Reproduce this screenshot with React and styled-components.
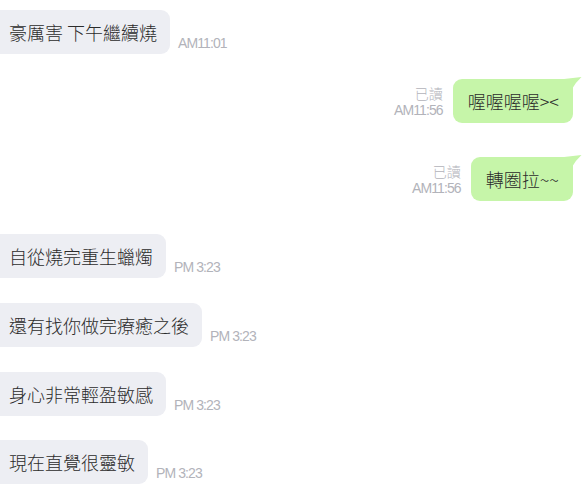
import React from "react";
import styled, { createGlobalStyle } from "styled-components";

const GlobalStyle = createGlobalStyle`
  html, body {
    margin: 0;
    padding: 0;
    background: #ffffff;
    overflow: hidden;
  }
  body {
    font-family: "Noto Sans CJK TC", "Liberation Sans", sans-serif;
  }
`;

const Chat = styled.div`
  width: 582px;
  height: 490px;
  display: flex;
  flex-direction: column;
  padding-top: 10px;
  box-sizing: border-box;
  overflow: hidden;
`;

const Row = styled.div`
  display: flex;
  align-items: flex-end;
  justify-content: ${(p) => (p.$mine ? "flex-end" : "flex-start")};
  padding-right: ${(p) => (p.$mine ? "9px" : "0")};
  margin-top: ${(p) => p.$gap}px;
`;

const Bubble = styled.div`
  position: relative;
  height: 44px;
  display: flex;
  align-items: center;
  box-sizing: border-box;
  border-radius: 9px;
  font-size: 18px;
  font-weight: 300;
  color: #2b2b2b;
  white-space: pre;
  background: ${(p) => (p.$mine ? "#c6f5a9" : "#edeef3")};
  padding: ${(p) => (p.$mine ? "0 14px 0 15px" : "0 13px 0 21px")};
  margin-left: ${(p) => (p.$mine ? "0" : "-12px")};
`;

const Tail = styled.svg`
  position: absolute;
  top: -2px;
  right: -9px;
  width: 18px;
  height: 12px;
`;

const Meta = styled.div`
  display: flex;
  flex-direction: column;
  align-items: ${(p) => (p.$mine ? "flex-end" : "flex-start")};
  margin: ${(p) => (p.$mine ? "0 10px 5px 0" : "0 0 3px 8px")};
  color: #b2b3ba;
`;

const Read = styled.span`
  font-size: 14px;
  line-height: 17px;
  font-family: "Noto Sans CJK TC", sans-serif;
  font-weight: 300;
`;

const Time = styled.span`
  font-family: "Liberation Sans", Arial, sans-serif;
  font-size: 14px;
  line-height: 16px;
  letter-spacing: -0.9px;
`;

const messages = [
  { text: "豪厲害 下午繼續燒", time: "AM11:01", gap: 0 },
  { text: "喔喔喔喔><", time: "AM11:56", mine: true, gap: 25 },
  { text: "轉圈拉~~", time: "AM11:56", mine: true, gap: 34 },
  { text: "自從燒完重生蠟燭", time: "PM 3:23", gap: 33 },
  { text: "還有找你做完療癒之後", time: "PM 3:23", gap: 25 },
  { text: "身心非常輕盈敏感", time: "PM 3:23", gap: 25 },
  { text: "現在直覺很靈敏", time: "PM 3:23", gap: 24 },
];

const Message = ({ text, time, mine, gap }) => (
  <Row $mine={mine} $gap={gap}>
    {mine && (
      <Meta $mine>
        <Read>已讀</Read>
        <Time>{time}</Time>
      </Meta>
    )}
    <Bubble $mine={mine}>
      {text}
      {mine && (
        <Tail viewBox="0 0 18 12">
          <path d="M0 2 L17.5 0 Q12 5 8 12 L0 12 Z" fill="#c6f5a9" />
        </Tail>
      )}
    </Bubble>
    {!mine && (
      <Meta>
        <Time>{time}</Time>
      </Meta>
    )}
  </Row>
);

export default function App() {
  return (
    <>
      <GlobalStyle />
      <Chat>
        {messages.map((m, i) => (
          <Message key={i} {...m} />
        ))}
      </Chat>
    </>
  );
}
